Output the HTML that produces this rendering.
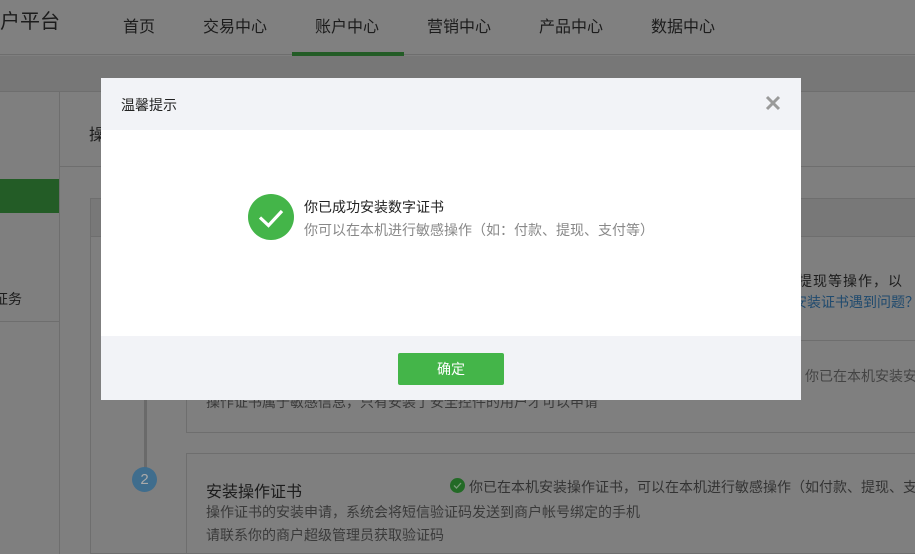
<!DOCTYPE html>
<html><head><meta charset="utf-8"><style>
*{margin:0;padding:0;box-sizing:border-box}
body{width:915px;height:554px;overflow:hidden;background:#7f7f7f;font-family:"Liberation Sans","Noto Sans CJK SC",sans-serif;position:relative;color:#1a1a1a}
.a{position:absolute;white-space:nowrap}
</style></head><body>
<div class="a" style="left:0;top:0;width:915px;height:55px;background:#808080;border-bottom:1px solid #6e6e6e"></div>
<div class="a" style="left:0;top:5px;font-size:20px;color:#1c1c1c">户平台</div>
<div class="a" style="left:123px;top:13px;font-size:16px;color:#1c1c1c;word-spacing:0">首页</div>
<div class="a" style="left:203px;top:13px;font-size:16px;color:#1c1c1c">交易中心</div>
<div class="a" style="left:315px;top:13px;font-size:16px;color:#1c1c1c">账户中心</div>
<div class="a" style="left:427px;top:13px;font-size:16px;color:#1c1c1c">营销中心</div>
<div class="a" style="left:539px;top:13px;font-size:16px;color:#1c1c1c">产品中心</div>
<div class="a" style="left:651px;top:13px;font-size:16px;color:#1c1c1c">数据中心</div>
<div class="a" style="left:292px;top:52px;width:112px;height:4px;background:#235c26"></div>
<div class="a" style="left:0;top:56px;width:915px;height:36px;background:#777;border-bottom:1px solid #6e6e6e"></div>
<div class="a" style="left:59px;top:92px;width:1px;height:462px;background:#6e6e6e"></div>
<div class="a" style="left:0;top:179px;width:59px;height:34px;background:#235c26"></div>
<div class="a" style="left:-6px;top:289px;font-size:14px;color:#1c1c1c">证务</div>
<div class="a" style="left:0;top:321px;width:59px;height:1px;background:#6e6e6e"></div>
<div class="a" style="left:60px;top:166px;width:855px;height:1px;background:#6e6e6e"></div>
<div class="a" style="left:89px;top:121px;font-size:16px;color:#1c1c1c">操</div>
<div class="a" style="left:90px;top:198px;width:825px;height:356px;border:1px solid #6e6e6e;border-right:none"></div>
<div class="a" style="left:91px;top:199px;width:824px;height:38px;background:#787878;border-bottom:1px solid #6e6e6e"></div>
<div class="a" style="left:144px;top:380px;width:3px;height:90px;background:#6a6a6a"></div>
<div class="a" style="left:186px;top:340px;width:729px;height:93px;border:1px solid #6e6e6e;border-right:none"></div>
<div class="a" style="left:186px;top:453px;width:729px;height:101px;border:1px solid #6e6e6e;border-right:none"></div>
<div class="a" style="left:206px;top:392px;font-size:14px;color:#3a3a3a">操作证书属于敏感信息，只有安装了安全控件的用户才可以申请</div>
<div class="a" style="left:783px;top:271px;font-size:14px;color:#1c1c1c;letter-spacing:1px">、提现等操作，以</div>
<div class="a" style="left:793px;top:292px;font-size:14px;color:#1f4a6e">安装证书遇到问题？</div>
<div class="a" style="left:805px;top:366px;font-size:14px;color:#444">你已在本机安装安</div>
<div class="a" style="left:132px;top:467px;width:25px;height:25px;border-radius:50%;background:#3f6d8d;color:#aaa;font-size:15px;text-align:center;line-height:25px">2</div>
<div class="a" style="left:206px;top:478px;font-size:16px;color:#1c1c1c">安装操作证书</div>
<div class="a" style="left:450px;top:478px;width:15px;height:15px;border-radius:50%;background:#236a26"></div>
<svg class="a" style="left:450px;top:478px" width="15" height="15" viewBox="0 0 15 15"><path d="M4 7.5L6.5 10L11 5" stroke="#7a9a7a" stroke-width="1.3" fill="none"/></svg>
<div class="a" style="left:469px;top:477px;font-size:14px;color:#333">你已在本机安装操作证书，可以在本机进行敏感操作（如付款、提现、支</div>
<div class="a" style="left:206px;top:502px;font-size:14px;color:#3a3a3a">操作证书的安装申请，系统会将短信验证码发送到商户帐号绑定的手机</div>
<div class="a" style="left:206px;top:525px;font-size:14px;color:#3a3a3a">请联系你的商户超级管理员获取验证码</div>

<div class="a" style="left:101px;top:78px;width:700px;height:322px;background:#fff">
 <div class="a" style="left:0;top:0;width:700px;height:52px;background:#f2f3f7"></div>
 <div class="a" style="left:20px;top:17px;font-size:14px;color:#222">温馨提示</div>
 <svg class="a" style="left:664px;top:17px" width="16" height="16" viewBox="0 0 16 16"><path d="M2 2L14 14M14 2L2 14" stroke="#9a9a9a" stroke-width="3"/></svg>
 <div class="a" style="left:147px;top:116px;width:46px;height:46px;border-radius:50%;background:#44b549"></div>
 <svg class="a" style="left:147px;top:116px" width="46" height="46" viewBox="0 0 46 46"><path d="M12 23.5L20.5 31.5L34 17" stroke="#fff" stroke-width="3.2" fill="none"/></svg>
 <div class="a" style="left:203px;top:119px;font-size:14px;color:#222">你已成功安装数字证书</div>
 <div class="a" style="left:203px;top:142px;font-size:14px;color:#888">你可以在本机进行敏感操作（如：付款、提现、支付等）</div>
 <div class="a" style="left:0;top:258px;width:700px;height:64px;background:#f2f3f7"></div>
 <div class="a" style="left:297px;top:275px;width:106px;height:32px;background:#44b549;border-radius:2px;color:#fff;font-size:14px;text-align:center;line-height:32px">确定</div>
</div>
</body></html>
